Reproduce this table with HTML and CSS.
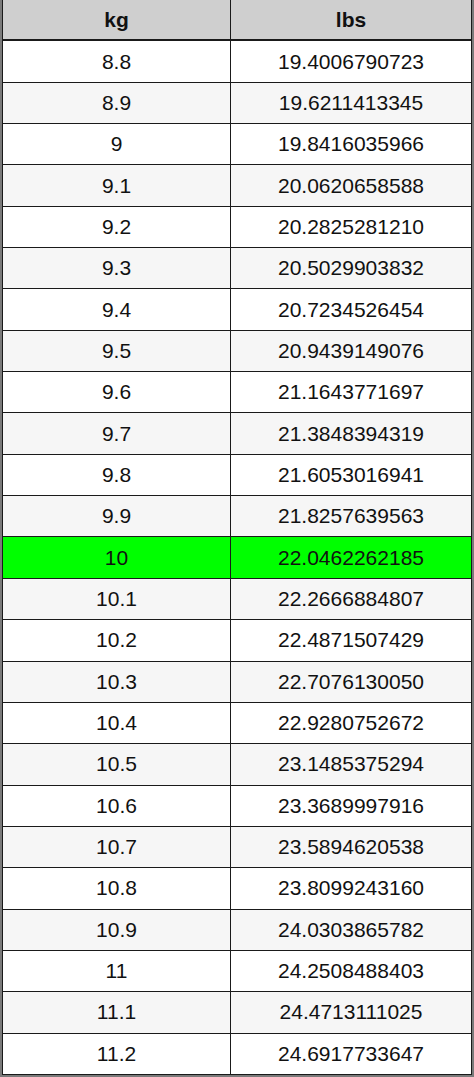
FILE: index.html
```html
<!DOCTYPE html>
<html>
<head>
<meta charset="utf-8">
<link rel="stylesheet" href="styles.css">
</head>
<body>
<div class="frame">
  <div class="table">
    <div class="cell head">kg</div><div class="cell head">lbs</div>
    <div class="cell">8.8</div><div class="cell">19.4006790723</div>
    <div class="cell alt">8.9</div><div class="cell alt">19.6211413345</div>
    <div class="cell">9</div><div class="cell">19.8416035966</div>
    <div class="cell alt">9.1</div><div class="cell alt">20.0620658588</div>
    <div class="cell">9.2</div><div class="cell">20.2825281210</div>
    <div class="cell alt">9.3</div><div class="cell alt">20.5029903832</div>
    <div class="cell">9.4</div><div class="cell">20.7234526454</div>
    <div class="cell alt">9.5</div><div class="cell alt">20.9439149076</div>
    <div class="cell">9.6</div><div class="cell">21.1643771697</div>
    <div class="cell alt">9.7</div><div class="cell alt">21.3848394319</div>
    <div class="cell">9.8</div><div class="cell">21.6053016941</div>
    <div class="cell alt">9.9</div><div class="cell alt">21.8257639563</div>
    <div class="cell hl">10</div><div class="cell hl">22.0462262185</div>
    <div class="cell alt">10.1</div><div class="cell alt">22.2666884807</div>
    <div class="cell">10.2</div><div class="cell">22.4871507429</div>
    <div class="cell alt">10.3</div><div class="cell alt">22.7076130050</div>
    <div class="cell">10.4</div><div class="cell">22.9280752672</div>
    <div class="cell alt">10.5</div><div class="cell alt">23.1485375294</div>
    <div class="cell">10.6</div><div class="cell">23.3689997916</div>
    <div class="cell alt">10.7</div><div class="cell alt">23.5894620538</div>
    <div class="cell">10.8</div><div class="cell">23.8099243160</div>
    <div class="cell alt">10.9</div><div class="cell alt">24.0303865782</div>
    <div class="cell">11</div><div class="cell">24.2508488403</div>
    <div class="cell alt">11.1</div><div class="cell alt">24.4713111025</div>
    <div class="cell">11.2</div><div class="cell">24.6917733647</div>
  </div>
</div>
</body>
</html>
```
FILE: styles.css
```css
html, body {
  margin: 0;
  padding: 0;
  background: #7a7a7a;
}
.frame {
  width: 474px;
  height: 1077px;
  box-sizing: border-box;
  padding: 0 2px 2px 2px;
  background: #7a7a7a;
}
.table {
  display: grid;
  grid-template-columns: 227px 1fr;
  grid-template-rows: repeat(26, 1fr);
  gap: 1px;
  height: 100%;
  box-sizing: border-box;
  border: 1px solid #1a1a1a;
  border-top: none;
  background: #1a1a1a;
  font-family: "Liberation Sans", Arial, sans-serif;
  font-size: 21px;
  color: #111;
}
.cell {
  background: #ffffff;
  display: flex;
  align-items: center;
  justify-content: center;
}
.cell.alt {
  background: #f6f6f6;
}
.cell.head {
  background: #cfcfcf;
  font-weight: bold;
  border-bottom: 1px solid #1a1a1a;
}
.cell.hl {
  background: #00ff00;
}
```
